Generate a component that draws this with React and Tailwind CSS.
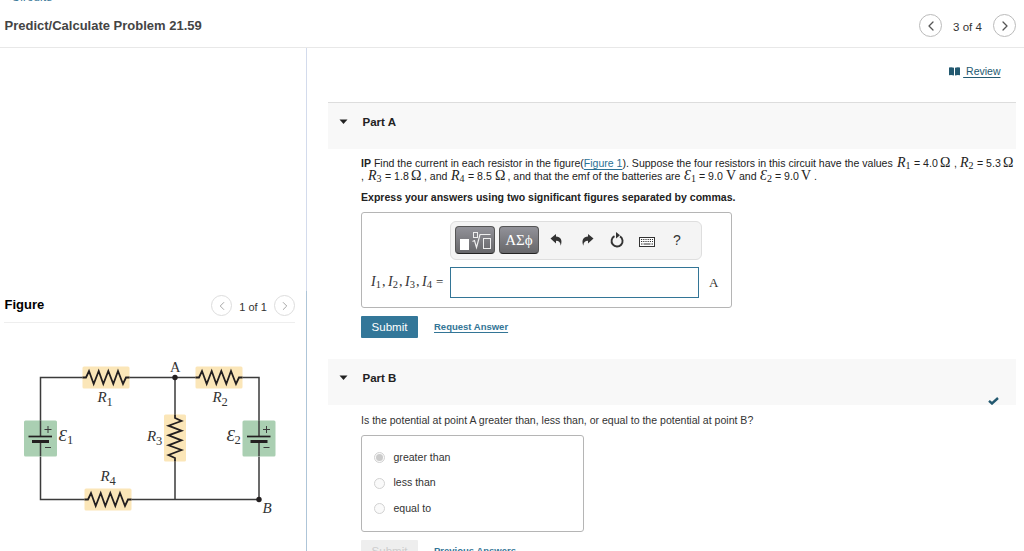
import { ChevronLeft, ChevronRight } from 'lucide-react'

function RoundButton({ className, children }) {
  return (
    <button type="button" className={`flex shrink-0 items-center justify-center rounded-full border ${className}`}>
      {children}
    </button>
  )
}

// math symbol with an optional subscript, set in serif
function Sym({ name, sub, upright = false, width }) {
  return (
    <span className={`inline-block shrink-0 font-['Liberation_Serif',serif] text-[14px] leading-[13px] whitespace-nowrap ${width}`}>
      <span className={upright ? '' : 'italic'}>{name}</span>
      {sub ? <span className="relative top-[2px] text-[10px] leading-none">{sub}</span> : null}
    </span>
  )
}

function Words({ width, className = '', children }) {
  return <span className={`inline-block shrink-0 whitespace-pre ${width} ${className}`}>{children}</span>
}

function PartHeader({ title, className = '', children }) {
  return (
    <div className={`flex bg-[#f8f8f8] ${className}`}>
      <svg width="9" height="6" viewBox="0 0 9 6" className="mt-[16px] ml-[11px] shrink-0">
        <path d="M0.5 0.5H8.5L4.5 5Z" fill="#222" />
      </svg>
      <h2 className="mt-[11px] ml-[14.5px] text-[11.5px] leading-4 font-bold text-[#222]">{title}</h2>
      {children}
    </div>
  )
}

const ZIGZAG = 'M0 0H3.5L6.5 -6.5L11.2 6.5L16.2 -6.5L20.8 6.5L25.8 -6.5L30.8 6.5L35.5 -6.5L40.5 6.5L43.5 0H47'

function Resistor({ x, y, vertical = false }) {
  return (
    <g transform={`translate(${x} ${y})${vertical ? ' rotate(90)' : ''}`}>
      <rect x="0" y="-11" width="47" height="22" rx="1.5" fill="#fbe6b8" />
      <path d={ZIGZAG} fill="none" stroke="#231f20" strokeWidth="1.8" />
    </g>
  )
}

function Battery({ x, y }) {
  return (
    <g transform={`translate(${x} ${y})`}>
      <rect width="33" height="36" rx="1.5" fill="#aacfb2" />
      <path d="M16.5 0V15.5M16.5 21V36" stroke="#3b3b3b" strokeWidth="1.5" />
      <path d="M4.5 16H28" stroke="#231f20" strokeWidth="1.7" />
      <path d="M8 21H25" stroke="#231f20" strokeWidth="3" />
      <path d="M20.5 9H27.5M24 5.5V12.5M21 27H27" stroke="#3b3b3b" strokeWidth="1" />
    </g>
  )
}

function Label({ x, y, name, sub, dx = 9, size = 15 }) {
  return (
    <g fill="#333" fontFamily="'Liberation Serif', serif">
      <text x={x} y={y} fontSize={size} fontStyle="italic">{name}</text>
      <text x={x + dx} y={y + 3.5} fontSize="12.5">{sub}</text>
    </g>
  )
}

function Circuit() {
  return (
    <svg width="306" height="175" viewBox="0 350 306 175" className="block">
      <path d="M83 377.5H40.5V421M40.5 457V499.5H86M129 377.5H196M242 377.5H259V421M259 457V499.5H131M175 377.5V415M175 461V499.5" fill="none" stroke="#3b3b3b" strokeWidth="1.5" />
      <Resistor x={82.5} y={377.5} />
      <Resistor x={195.5} y={377.5} />
      <Resistor x={84.5} y={499.5} />
      <Resistor x={175} y={414.5} vertical />
      <Battery x={24} y={420.5} />
      <Battery x={242.5} y={420.5} />
      <circle cx="175" cy="377.5" r="2.7" fill="#231f20" />
      <circle cx="259" cy="499.5" r="2.7" fill="#231f20" />
      <Label x={97.5} y={402} name="R" sub="1" />
      <Label x={212.5} y={402} name="R" sub="2" />
      <Label x={147} y={441} name="R" sub="3" />
      <Label x={100.5} y={481} name="R" sub="4" />
      <Label x={58.5} y={440.5} name="Ɛ" sub="1" dx={8.5} size={17} />
      <Label x={226.5} y={440.5} name="Ɛ" sub="2" dx={8} size={17} />
      <text x="170" y="372" fontSize="14.5" fill="#333" fontFamily="'Liberation Serif', serif">A</text>
      <text x="262.5" y="513" fontSize="15" fontStyle="italic" fill="#333" fontFamily="'Liberation Serif', serif">B</text>
    </svg>
  )
}

function EquationToolbar() {
  const key = 'flex h-7 w-10 shrink-0 items-center justify-center rounded-[4px] border border-[#555] border-b-[#222] bg-linear-to-b from-[#929299] to-[#67676a]'
  return (
    <div className="flex h-[39px] w-[252px] items-center rounded-md border border-[#dedede] bg-[#f4f4f4] pb-px pl-1">
      <button type="button" className={key}>
        <svg width="34" height="22" viewBox="0 0 34 22" fill="none" className="shrink-0">
          <rect x="2" y="10" width="9" height="11" fill="#fff" />
          <rect x="15.5" y="3.5" width="4" height="5" stroke="#eee" />
          <path d="M14.5 12.5L16.5 11.5L18.5 18.5L22 5.5H32.5" stroke="#eee" strokeWidth="1.2" />
          <rect x="25.5" y="9.5" width="7" height="10" stroke="#eee" />
        </svg>
      </button>
      <button type="button" className={`ml-1 font-['Liberation_Serif',serif] text-[15px] text-white ${key}`}>
        ΑΣϕ
      </button>
      <svg width="13" height="12" viewBox="0 0 13 12" className="ml-[11px] shrink-0">
        <path d="M0.5 4.5L6 0V2.6C10.5 3 12.8 6 10.7 11.8C10.5 8.3 9 6.8 6 6.7V9.4Z" fill="#333" />
      </svg>
      <svg width="13" height="12" viewBox="0 0 13 12" className="ml-[18px] shrink-0">
        <path d="M12.5 4.5L7 0V2.6C2.5 3 0.2 6 2.3 11.8C2.5 8.3 4 6.8 7 6.7V9.4Z" fill="#333" />
      </svg>
      <svg width="14" height="16" viewBox="0 0 14 16" className="ml-4 shrink-0">
        <path d="M10 4.4A5.5 5.5 0 1 1 4.5 4.2" fill="none" stroke="#333" strokeWidth="1.9" />
        <path d="M6 0L10 3.3L6 6.6Z" fill="#333" />
      </svg>
      <svg width="16" height="10" viewBox="0 0 16 10" className="mt-[3px] ml-[15px] shrink-0">
        <rect x="0.5" y="0.5" width="15" height="9" fill="#fff" stroke="#333" />
        <path d="M2 2.5H14M2 4.5H14" stroke="#333" strokeWidth="1.2" strokeDasharray="1.2 1" />
        <path d="M2 7H3.5M4.5 7H11.5M12.5 7H14" stroke="#333" />
      </svg>
      <span className="ml-[18px] text-[14px] leading-4 text-[#333]">?</span>
    </div>
  )
}

function Current({ index }) {
  return (
    <span className="w-[17px] shrink-0 whitespace-nowrap">
      <i>I</i>
      <span className="relative top-[2px] text-[10.5px]">{index}</span>
      {index < 4 ? <span className="ml-px">,</span> : null}
    </span>
  )
}

function Choice({ label, checked = false }) {
  return (
    <label className="flex h-[25.5px] items-center">
      <span className="flex size-[11px] items-center justify-center rounded-full border border-[#d2d2d2] bg-[#fafafa]">
        {checked ? <span className="size-[7px] rounded-full bg-[#cbcbcb]" /> : null}
      </span>
      <span className="ml-[8.5px] text-[10.55px]">{label}</span>
    </label>
  )
}

export default function App() {
  return (
    <div className="flex h-[551px] w-[1024px] flex-col overflow-hidden bg-white font-['Liberation_Sans',Arial,sans-serif] text-[11px] text-[#333]">
      <header className="flex h-12 shrink-0 border-b border-[#e8e8e8]">
        <div className="w-[500px] pl-[4.5px]">
          <a className="-mt-[8px] block h-[11px] text-[11.5px] leading-[11px] tracking-[0.03em] text-[#337596]">&lt;Circuits</a>
          <h1 className="mt-[14px] text-[13px] leading-[18px] font-bold text-[#444]">Predict/Calculate Problem 21.59</h1>
        </div>
        <div className="ml-auto flex items-start pt-[14px] pr-2">
          <RoundButton className="size-[23px] border-[#bbb] text-[#555]">
            <ChevronLeft size={16} strokeWidth={1.9} />
          </RoundButton>
          <span className="w-[51px] pt-[5px] text-center text-[11.5px] leading-4">3 of 4</span>
          <RoundButton className="size-[23px] border-[#bbb] text-[#555]">
            <ChevronRight size={16} strokeWidth={1.9} />
          </RoundButton>
        </div>
      </header>

      <div className="flex min-h-0 flex-1">
        <aside className="flex w-[307px] shrink-0 flex-col">
          <div className="h-[243px] shrink-0 border-r border-[#d3dbec]" />
          <div className="flex-1 border-r border-[#aec5d8]">
            <div className="ml-1 flex h-8 w-[291px] border-b border-[#eee]">
              <h2 className="mt-[5px] ml-[0.5px] text-[13px] leading-[18px] font-bold text-black">Figure</h2>
              <div className="ml-auto flex items-start pt-1">
                <RoundButton className="size-[21px] border-[#ddd] text-[#999]">
                  <ChevronLeft size={14} strokeWidth={1.5} />
                </RoundButton>
                <span className="w-[42px] pt-1 text-center text-[11px] leading-4">1 of 1</span>
                <RoundButton className="size-[21px] border-[#ddd] text-[#999]">
                  <ChevronRight size={14} strokeWidth={1.5} />
                </RoundButton>
              </div>
            </div>
            <div className="pt-[27px]">
              <Circuit />
            </div>
          </div>
        </aside>

        <main className="w-[717px] shrink-0 pl-[21px]">
          <div className="flex h-[54px] items-start justify-end pt-[15px] pr-[23.5px]">
            <svg width="11" height="9" viewBox="0 0 11 9" className="mt-1">
              <path d="M0 0.5Q3 0 5 0.8V8.5Q3 7.7 0 8.2ZM6 0.8Q8 0 11 0.5V8.2Q8 7.7 6 8.500Z" fill="#235970" />
            </svg>
            <a className="ml-[3px] text-[10.5px] leading-4 whitespace-pre text-[#235970] underline underline-offset-2"> Review</a>
          </div>

          <PartHeader title="Part A" className="h-[47px] w-[688px] border-t border-[#ddd]" />

          <section className="pl-[33px]">
            <div className="mt-[7px] text-[10.55px] leading-[13px] text-[#222]">
              <div className="flex h-[13px] items-baseline">
                <Words width="w-[536px]">
                  <b className="font-bold">IP</b> Find the current in each resistor in the figure(<a className="text-[#2b7195] underline underline-offset-2">Figure 1</a>). Suppose the four resistors in this circuit have the values
                </Words>
                <Sym name="R" sub="1" width="w-[17px]" />
                <Words width="w-[26px]">= 4.0</Words>
                <Sym name="Ω" upright width="w-[14px]" />
                <Words width="w-[6px]">,</Words>
                <Sym name="R" sub="2" width="w-[17px]" />
                <Words width="w-[26px]">= 5.3</Words>
                <Sym name="Ω" upright width="w-[11px]" />
              </div>
              <div className="flex h-[13px] items-baseline">
                <Words width="w-[7px]">,</Words>
                <Sym name="R" sub="3" width="w-[17px]" />
                <Words width="w-[26px]">= 1.8</Words>
                <Sym name="Ω" upright width="w-[13px]" />
                <Words width="w-[27px]">, and</Words>
                <Sym name="R" sub="4" width="w-[17px]" />
                <Words width="w-[27px]">= 8.5</Words>
                <Sym name="Ω" upright width="w-[12.5px]" />
                <Words width="w-[176.5px]">, and that the emf of the batteries are</Words>
                <Sym name="Ɛ" sub="1" width="w-[15px]" />
                <Words width="w-[27px]">= 9.0</Words>
                <Sym name="V" upright width="w-[13px]" />
                <Words width="w-[21px]">and</Words>
                <Sym name="Ɛ" sub="2" width="w-[15px]" />
                <Words width="w-[26px]">= 9.0</Words>
                <Sym name="V" upright width="w-[13px]" />
                <Words width="w-[5px]">.</Words>
              </div>
            </div>
            <p className="mt-2 text-[10.55px] leading-[14px] font-bold text-[#222]">
              Express your answers using two significant figures separated by commas.
            </p>

            <div className="mt-2 h-[96px] w-[371px] rounded-[3px] border border-[#b5b5b5] pt-2">
              <div className="pl-[88px]">
                <EquationToolbar />
              </div>
              <div className="mt-[7px] flex h-[31px] items-center pl-[9px]">
                <span className="flex w-[79px] shrink-0 items-baseline font-['Liberation_Serif',serif] text-[14px] leading-4">
                  <Current index={1} />
                  <Current index={2} />
                  <Current index={3} />
                  <Current index={4} />
                  <span className="-ml-[3px] text-[13px]">=</span>
                </span>
                <input className="h-[31px] w-[249px] shrink-0 border border-[#337596] bg-white outline-none" />
                <span className="ml-[10px] font-['Liberation_Serif',serif] text-[13px]">A</span>
              </div>
            </div>

            <div className="mt-2 flex h-[22px] items-center">
              <button type="button" className="h-[22px] w-[57px] rounded-[1px] bg-[#337799] pt-px text-[11.5px] text-white">Submit</button>
              <a className="ml-4 pt-px text-[9.5px] font-bold text-[#337596] underline underline-offset-2">Request Answer</a>
            </div>
          </section>

          <PartHeader title="Part B" className="mt-[21px] h-[46px] w-[688px]">
            <svg width="11" height="8" viewBox="0 0 11 8" className="mt-[38px] mr-[17px] ml-auto">
              <path d="M1 3.8L4 6.5L10 1" fill="none" stroke="#235970" strokeWidth="2.4" />
            </svg>
          </PartHeader>

          <section className="pl-[33px]">
            <p className="mt-2 text-[10.55px] leading-[14px]">
              Is the potential at point A greater than, less than, or equal to the potential at point B?
            </p>
            <div className="mt-2 h-[97px] w-[223px] rounded-[3px] border border-[#b5b5b5] pt-[9px] pl-3">
              <Choice label="greater than" checked />
              <Choice label="less than" />
              <Choice label="equal to" />
            </div>
            <div className="mt-2 flex h-[22px] items-center">
              <button type="button" className="h-[22px] w-[57px] rounded-[1px] bg-[#eee] pt-px text-[11.5px] text-[#ccc]">Submit</button>
              <a className="ml-4 pt-px text-[9.5px] font-bold text-[#337596] underline underline-offset-2">Previous Answers</a>
            </div>
          </section>
        </main>
      </div>
    </div>
  )
}
